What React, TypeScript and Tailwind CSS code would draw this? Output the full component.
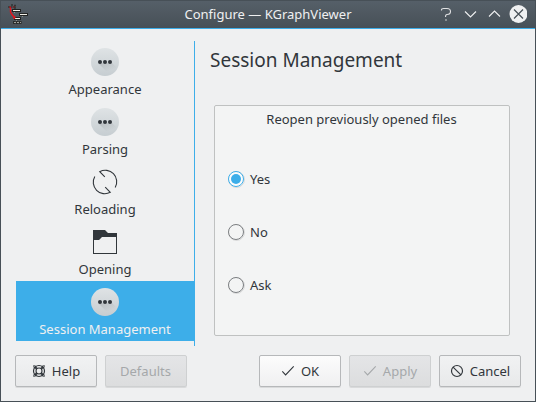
import type { ReactNode } from "react";

function AppIcon() {
  return (
    <svg width="22" height="22" viewBox="0 0 22 22" fill="none">
      <path d="M4 2h2M7 2.500h2M1 4h8M7 5h2" stroke="#353535" strokeWidth="1.5" strokeDasharray="2 0.5" />
      <path d="M2 4.200h2M6 4h1.500" stroke="#a31a1a" strokeWidth="1.2" />
      <path d="M5 7.500h9M12 11.500h9M7 15.500h7" stroke="#222423" strokeWidth="3" />
      <path d="M6 19.500h9" stroke="#2b2d2c" strokeWidth="3" strokeDasharray="2.500 0.4" />
      <path d="M6 7.500h7M13 11.500h7M8 15.500h5" stroke="#f0f0e8" strokeWidth="1" />
      <path d="M7 19.500h7" stroke="#9da19a" strokeWidth="1" strokeDasharray="2 1" />
      <path d="M7 9.500h1M15 13.500h1M9 17.500h1" stroke="#8d918a" />
      <path d="M3.500 4.500V9L5 11.500l3 3.500" stroke="#e8111a" strokeWidth="1.400" />
      <path d="M7.300 13v2.800" stroke="#e8111a" strokeWidth="1.800" />
    </svg>
  );
}

function DotsIcon({ id }: { id: string }) {
  return (
    <svg width="28" height="28" viewBox="0 0 28 28">
      <defs>
        <linearGradient id={id} x1="0" y1="0" x2="0" y2="1">
          <stop offset="0" stopColor="#dfe3e5" />
          <stop offset="1" stopColor="#c6cdd1" />
        </linearGradient>
        <linearGradient id={id + "s"} x1="0" y1="0" x2="0.600" y2="1">
          <stop offset="0" stopColor="#292c2f" stopOpacity="0.16" />
          <stop offset="0.800" stopColor="#292c2f" stopOpacity="0" />
        </linearGradient>
      </defs>
      <circle cx="14" cy="14" r="14" fill={`url(#${id})`} />
      <path d="M7.500 15.500 18 26l6-4 1-3-4.500-4.500z" fill={`url(#${id}s)`} />
      <g fill="#31363b">
        <circle cx="9" cy="14" r="2" />
        <circle cx="14" cy="14" r="2" />
        <circle cx="19" cy="14" r="2" />
      </g>
    </svg>
  );
}

function ReloadIcon() {
  return (
    <svg width="28" height="28" viewBox="0 0 28 28" fill="none" stroke="#31363b" strokeWidth="1.1">
      <path d="M13.800 8.800 8.700 3.700A11.500 11.500 0 0 1 24.200 19.500" />
      <path d="M14.200 19.200l5.100 5.100A11.500 11.500 0 0 1 3.800 8.500" />
    </svg>
  );
}

function FolderIcon() {
  return (
    <svg width="28" height="28" viewBox="0 0 28 28" fill="#31363b">
      <path fillRule="evenodd" d="M2 2h12l3 3h9v21H2zM3 12v13h22V9H11l-3 3z" />
    </svg>
  );
}

function CheckIcon() {
  return (
    <svg width="16" height="16" viewBox="0 0 16 16" fill="none" stroke="currentColor" strokeWidth="1.1">
      <path d="M2.300 8.400 5.600 11.900 13.700 3.400" />
    </svg>
  );
}

function HelpIcon() {
  return (
    <svg width="16" height="16" viewBox="0 0 16 16" fill="none" stroke="#31363b">
      <circle cx="8" cy="8" r="5.500" strokeWidth="1.200" />
      <circle cx="8" cy="8" r="3" strokeWidth="1.100" />
      <path d="M2.500 4.500v-2h2M11.500 2.500h2v2M2.500 11.500v2h2M11.500 13.500h2v-2" strokeOpacity="0.600" />
      <path d="M3.500 3.500l2.300 2.300M12.500 3.500l-2.300 2.300M3.500 12.500l2.300-2.300M12.500 12.500l-2.300-2.300" strokeWidth="2" />
    </svg>
  );
}

function CancelIcon() {
  return (
    <svg width="16" height="16" viewBox="0 0 16 16" fill="none" stroke="#31363b" strokeWidth="1.150">
      <circle cx="8" cy="8" r="5.500" />
      <path d="M4.100 4.100l7.800 7.800" />
    </svg>
  );
}

function NavItem({ label, icon, active = false }: { label: string; icon: ReactNode; active?: boolean }) {
  return (
    <li className={`flex h-[60px] flex-col items-center pt-[7px] ${active ? "bg-[#3daee9] text-[#eff0f1]" : ""}`}>
      {icon}
      <span className="mt-[4px] whitespace-nowrap leading-[18px]">{label}</span>
    </li>
  );
}

function Radio({ label, checked = false }: { label: string; checked?: boolean }) {
  return (
    <label className="flex h-[18px] items-center gap-[5px] leading-[18px]">
      <svg width="17" height="18" viewBox="0 0 17 18" fill="none">
        <circle cx="8.500" cy="9.500" r="8" stroke="#000" strokeOpacity="0.1" />
        <circle cx="8" cy="9" r="7.500" fill={checked ? "#fcfcfc" : "#f3f4f4"} stroke={checked ? "#3daee9" : "#7c7f82"} />
        {checked && <circle cx="8" cy="9" r="5" fill="#3daee9" />}
      </svg>
      {label}
    </label>
  );
}

type ButtonProps = { label: string; icon?: ReactNode; disabled?: boolean; primary?: boolean };

function Button({ label, icon, disabled = false, primary = false }: ButtonProps) {
  const look = disabled
    ? "border-[#ced0d1] bg-linear-to-b from-[#e4e5e7] to-[#dcddde] text-[#a5a8aa]"
    : primary
      ? "border-[#b6b8ba] bg-linear-to-b from-[#fcfcfc] to-[#f0f0f1]"
      : "border-[#b6b8ba] bg-linear-to-b from-[#f1f2f3] to-[#e8e9ea]";
  return (
    <button
      disabled={disabled}
      className={`flex h-[32px] w-[82px] items-center justify-center gap-[5px] rounded-[2px] border pr-px shadow-[0_1px_0_rgba(0,0,0,0.09)] ${look}`}
    >
      {icon}
      <span className="leading-[18px]">{label}</span>
    </button>
  );
}

export default function App() {
  return (
    <div className="flex h-[402px] w-[536px] flex-col overflow-hidden border border-t-0 border-[#475057] bg-[#eff0f1] font-['Noto_Sans',sans-serif] text-[13px] text-[#31363b]">
      <header className="flex h-[29px] shrink-0 items-center border-b border-[#3daee9] bg-linear-to-b from-[#566069] to-[#475057] text-[#eff0f1] shadow-[inset_0_1px_0_#475057]">
        <div className="ml-[6px] w-[70px]">
          <AppIcon />
        </div>
        <h1 className="flex-1 pl-[22px] text-center leading-[18px]">Configure — KGraphViewer</h1>
        <svg className="mr-[8px]" width="90" height="20" viewBox="0 0 90 20" fill="none" stroke="#eff0f1" strokeWidth="1.1">
          <path d="M4.500 6.500V5.500Q4.500 4.500 6.500 4.500H10Q13.500 4.500 13.500 7.500T10 10.500Q8.500 10.500 8.500 13" strokeOpacity="0.900" />
          <path d="M9 15v2" strokeWidth="1.5" strokeOpacity="0.5" />
          <path d="M28 7.500l5.500 5.500L39 7.500M52 12.500l5.500-5.500 5.500 5.500" />
          <circle cx="81.500" cy="10" r="9" fill="#eff0f1" stroke="none" />
          <path d="M77 5.500l9 9M86 5.500l-9 9" stroke="#475057" strokeWidth="1.2" />
        </svg>
      </header>

      <main className="flex h-[317px] shrink-0 pl-[15px] pt-[12px]">
        <nav className="h-[305px] w-[179px] shrink-0 border-r border-[#3daee9]">
          <ul>
            <NavItem label="Appearance" icon={<DotsIcon id="appearance" />} />
            <NavItem label="Parsing" icon={<DotsIcon id="parsing" />} />
            <NavItem label="Reloading" icon={<ReloadIcon />} />
            <NavItem label="Opening" icon={<FolderIcon />} />
            <NavItem active label="Session Management" icon={<DotsIcon id="session" />} />
          </ul>
        </nav>
        <section className="flex flex-1 flex-col pl-[15px] pt-[5px]">
          <h2 className="h-[59px] text-[19px] leading-[28px]">Session Management</h2>
          <fieldset className="ml-[4px] flex h-[231px] w-[296px] flex-col rounded-[2px] border border-[#bfc1c1] bg-[#f3f4f4] px-[13px] pt-[4px]">
            <div className="pr-px text-center leading-[18px]">Reopen previously opened files</div>
            <div className="mt-[42px] flex flex-col gap-[35px]">
              <Radio checked label="Yes" />
              <Radio label="No" />
              <Radio label="Ask" />
            </div>
          </fieldset>
        </section>
      </main>

      <footer className="flex gap-[8px] px-[14px] pt-[9px]">
        <Button label="Help" icon={<HelpIcon />} />
        <Button disabled label="Defaults" />
        <div className="flex-1" />
        <Button primary label="OK" icon={<CheckIcon />} />
        <Button disabled label="Apply" icon={<CheckIcon />} />
        <Button label="Cancel" icon={<CancelIcon />} />
      </footer>
    </div>
  );
}
